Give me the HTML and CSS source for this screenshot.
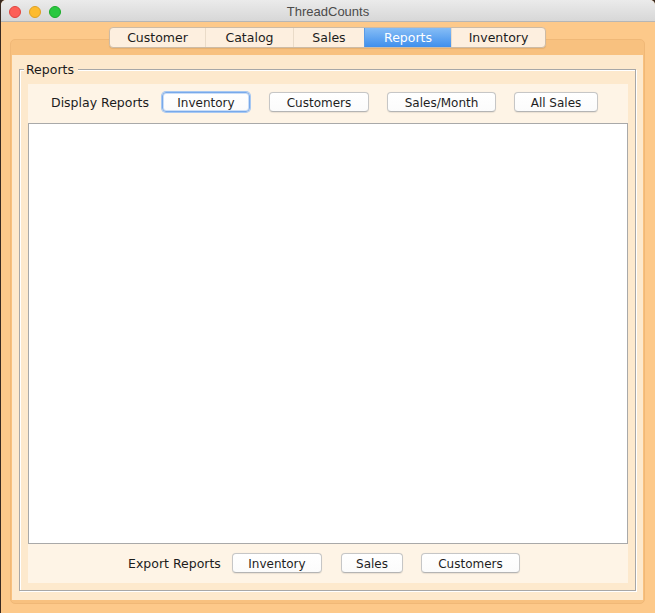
FILE: index.html
```html
<!DOCTYPE html>
<html>
<head>
<meta charset="utf-8">
<title>ThreadCounts</title>
<link rel="stylesheet" href="styles.css">
</head>
<body>
<div class="window">
  <div class="titlebar">
    <div class="lights">
      <span class="light red"></span>
      <span class="light yellow"></span>
      <span class="light green"></span>
    </div>
    <div class="title">ThreadCounts</div>
    <div></div>
  </div>
  <div class="frame">
    <div class="tabs">
      <div class="tab tab-customer">Customer</div>
      <div class="tab tab-catalog">Catalog</div>
      <div class="tab tab-sales">Sales</div>
      <div class="tab tab-reports selected">Reports</div>
      <div class="tab tab-inventory">Inventory</div>
    </div>
    <div class="well">
      <div class="panel">
        <div class="group">
          <span class="group-label">Reports</span>
          <div class="inner">
            <div class="row row-display">
              <span class="label label-display">Display Reports</span>
              <button class="btn focused b-inv">Inventory</button>
              <button class="btn b-cust">Customers</button>
              <button class="btn b-month">Sales/Month</button>
              <button class="btn b-all">All Sales</button>
            </div>
            <div class="textarea"></div>
            <div class="row row-export">
              <span class="label label-export">Export Reports</span>
              <button class="btn e-inv">Inventory</button>
              <button class="btn e-sales">Sales</button>
              <button class="btn e-cust">Customers</button>
            </div>
          </div>
        </div>
      </div>
    </div>
  </div>
</div>
</body>
</html>
```

FILE: styles.css
```css
* { box-sizing: border-box; }

html, body {
  margin: 0;
  padding: 0;
}

body {
  width: 655px;
  height: 613px;
  overflow: hidden;
  background: #3a2a20;
  font-family: "DejaVu Sans", sans-serif;
}

.window {
  margin-left: 1px;
  height: 613px;
  background: #fdc98a;
  border-radius: 5px 5px 0 0;
  overflow: hidden;
  display: flex;
  flex-direction: column;
}

/* title bar */
.titlebar {
  height: 22px;
  flex: none;
  border-bottom: 1px solid #b6b6b6;
  background: linear-gradient(#ebebeb, #d7d7d7);
  display: grid;
  grid-template-columns: 1fr auto 1fr;
  align-items: center;
  padding-top: 2px;
}

.lights {
  display: flex;
  gap: 8px;
  padding-left: 8px;
}

.light {
  width: 12px;
  height: 12px;
  border-radius: 50%;
  display: block;
}
.light.red { background: #fd5f57; border: 0.5px solid #e0443e; }
.light.yellow { background: #fdbb2e; border: 0.5px solid #dea123; }
.light.green { background: #2ac840; border: 0.5px solid #1aab29; }

.title {
  font-family: "Liberation Sans", Arial, sans-serif;
  font-size: 13px;
  color: #4b4b4b;
  line-height: 16px;
}

/* main frame */
.frame {
  flex: 1;
  display: flex;
  flex-direction: column;
  padding: 5px 10px 9px 9px;
}

.tabs {
  align-self: center;
  display: flex;
  height: 21px;
  position: relative;
  z-index: 1;
  border: 1px solid #cdbba5;
  border-radius: 4px;
  background: #fdefdf;
  box-shadow: 0 1px 1px rgba(120, 80, 30, 0.15);
  overflow: hidden;
}

.tab {
  font-size: 12.5px;
  color: #1c1c1c;
  display: flex;
  align-items: center;
  justify-content: center;
  border-left: 1px solid #eadbc8;
  line-height: 19px;
}
.tab:first-child { border-left: none; }
.tab-customer { width: 95px; }
.tab-catalog { width: 88px; }
.tab-sales { width: 71px; }
.tab-reports { width: 87px; }
.tab-inventory { width: 94px; }

.tab.selected {
  background: linear-gradient(#86bdf6, #3f8fec);
  color: #ffffff;
  border-left-color: #5a9be6;
}

.well {
  flex: 1;
  margin-top: -9px;
  border: 1px solid #f0b877;
  border-radius: 5px;
  background: #f8c17f;
  padding: 15px 1px 3px 1px;
  display: flex;
}

.panel {
  flex: 1;
  background: #fde9cd;
  padding: 14px 7px 9px 7px;
  display: flex;
}

.group {
  flex: 1;
  position: relative;
  border: 1px solid #a7a7a7;
  box-shadow: inset 1px 1px 0 #ffffff, 1px 1px 0 #ffffff;
  padding: 14px 7px 7px 8px;
  display: flex;
}

.group-label {
  position: absolute;
  left: 4px;
  top: -8px;
  padding: 0 4px 0 2px;
  background: #fde9cd;
  font-size: 12.5px;
  line-height: 15px;
  color: #1a1a1a;
}

.inner {
  flex: 1;
  background: #fef4e6;
  display: flex;
  flex-direction: column;
}

.row {
  height: 39px;
  flex: none;
  display: flex;
  align-items: flex-start;
}

.row-display { padding: 8px 0 0 23px; }
.row-export { padding: 9px 0 0 100px; }

.label {
  font-size: 12.5px;
  color: #1c1c1c;
  line-height: 20px;
  padding-top: 1px;
}
.label-display { width: 111px; }
.label-export { width: 104px; }

.btn {
  height: 20px;
  padding: 2px 0 0 0;
  margin: 0;
  border: 1px solid #c6c6c6;
  border-bottom-color: #b4b4b4;
  border-radius: 4px;
  background: linear-gradient(#ffffff, #fbfbfb);
  box-shadow: 0 0.5px 1px rgba(0, 0, 0, 0.08);
  font-family: "DejaVu Sans", sans-serif;
  font-size: 12px;
  color: #1e1e1e;
  line-height: 16px;
  text-align: center;
}

.btn.focused {
  border-color: #78a9ea;
  box-shadow: 0 0 0 1px #a7c8f2, inset 0 0 0 1px #c9ddf7;
}

.b-inv { width: 88px; }
.b-cust { width: 100px; margin-left: 19px; }
.b-month { width: 109px; margin-left: 18px; }
.b-all { width: 84px; margin-left: 18px; }

.e-inv { width: 90px; }
.e-sales { width: 62px; margin-left: 19px; }
.e-cust { width: 99px; margin-left: 18px; }

.textarea {
  flex: 1;
  background: #ffffff;
  border: 1px solid #a9a9a9;
}
```
